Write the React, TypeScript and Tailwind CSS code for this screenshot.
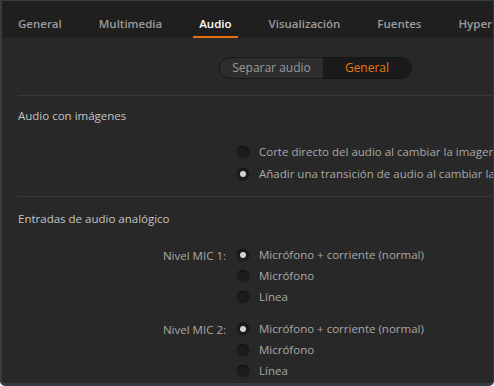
import React from 'react';

const Radio: React.FC<{ checked?: boolean }> = ({ checked }) => (
  <span className="w-[14px] h-[14px] rounded-full bg-[#1c1c1c] border border-[#222222] flex items-center justify-center shrink-0 shadow-[inset_0_1px_1px_rgba(0,0,0,0.5)]">
    {checked && <span className="w-[6px] h-[6px] rounded-full bg-[#d2d2d2]" />}
  </span>
);

const Option: React.FC<{ label: string; checked?: boolean }> = ({ label, checked }) => (
  <div className="flex items-center gap-[9px] h-[21px] whitespace-nowrap">
    <Radio checked={checked} />
    <span className="text-[#a8a8a8]">{label}</span>
  </div>
);

const MicGroup: React.FC<{ label: string }> = ({ label }) => (
  <div className="flex">
    <div className="w-[234px] pr-[10px] text-right h-[21px] leading-[21px] text-[#a8a8a8]">{label}</div>
    <div className="flex flex-col">
      <Option label="Micrófono + corriente (normal)" checked />
      <Option label="Micrófono" />
      <Option label="Línea" />
    </div>
  </div>
);

const App: React.FC = () => {
  const tabs = ['General', 'Multimedia', 'Audio', 'Visualización', 'Fuentes', 'Hyper'];

  return (
    <div
      className="w-[494px] h-[386px] overflow-hidden bg-[#343b43] pl-[2px] pt-px pr-px pb-[3px] rounded-b-[5px] text-[11.5px]"
      style={{ fontFamily: '"Open Sans", "Noto Sans", sans-serif' }}
    >
      <div className="h-full bg-[#282828] overflow-hidden rounded-b-[3px]">
        <nav className="h-[37px] bg-[#1f1f1f] flex items-stretch pl-[16px] gap-[37px] whitespace-nowrap font-semibold text-[11.5px]">
          {tabs.map((t) => (
            <div
              key={t}
              className={`relative flex items-center pt-[8px] ${t === 'Audio' ? 'text-white' : 'text-[#9c9c9c]'}`}
            >
              {t}
              {t === 'Audio' && (
                <span className="absolute -left-[6px] -right-[6px] bottom-0 h-[2px] bg-[#e2700f]" />
              )}
            </div>
          ))}
        </nav>

        <div className="flex justify-center pt-[19px] pl-[136px]">
          <div className="flex h-[22px] rounded-full border border-[#161616] overflow-hidden bg-[#2c2c2c] text-[12px]">
            <div className="w-[103px] flex items-center justify-center text-[#9a9a9a] bg-[#2d2d2d]">Separar audio</div>
            <div className="w-[88px] flex items-center justify-center text-[#e8760f] bg-[#1a1a1a]">General</div>
          </div>
        </div>

        <div className="ml-[16px] mt-[16px] border-t border-[#383838]" />

        <div className="pl-[16px] pt-[11px] text-[#c4c4c4]">Audio con imágenes</div>
        <div className="pl-[234px] pt-[17px] flex flex-col gap-px">
          <Option label="Corte directo del audio al cambiar la imagen" />
          <Option label="Añadir una transición de audio al cambiar la imagen" checked />
        </div>

        <div className="ml-[16px] mt-[12px] border-t border-[#383838]" />

        <div className="pl-[16px] pt-[13px] text-[#c4c4c4]">Entradas de audio analógico</div>
        <div className="pt-[17px] flex flex-col gap-[11px]">
          <MicGroup label="Nivel MIC 1:" />
          <MicGroup label="Nivel MIC 2:" />
        </div>
      </div>
    </div>
  );
};

export default App;
